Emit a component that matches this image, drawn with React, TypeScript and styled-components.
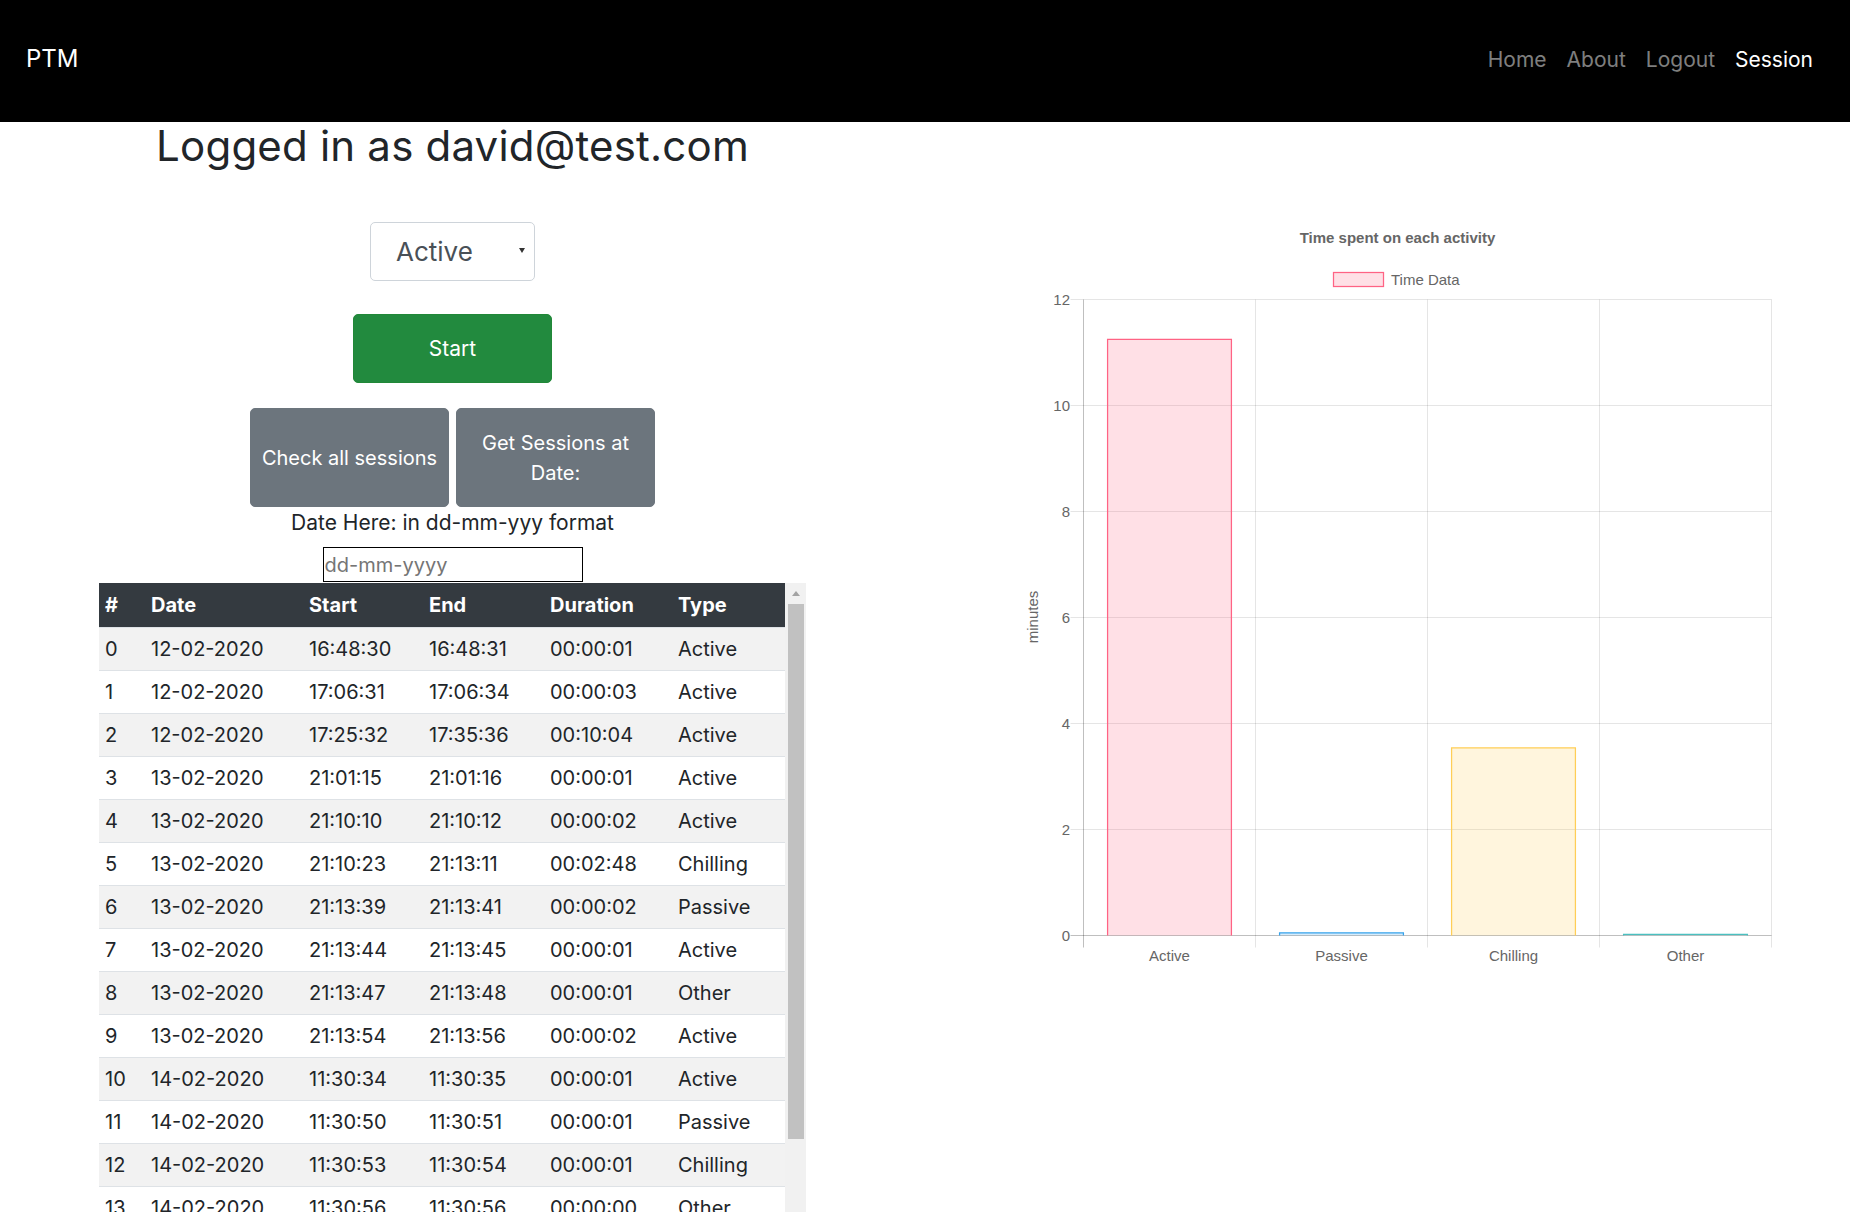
import React from "react";
import styled, { createGlobalStyle } from "styled-components";

const GlobalStyle = createGlobalStyle`
  html, body { margin: 0; padding: 0; height: 100%; overflow: hidden; background: #fff; }
  body { font-family: Inter, "Open Sans", sans-serif; color: #212529; }
  #root { height: 100%; }
  *, *::before, *::after { box-sizing: border-box; }
`;

const Page = styled.div`
  height: 100vh;
  display: flex;
  flex-direction: column;
`;

const Navbar = styled.nav`
  flex: none;
  height: 122px;
  background: #000;
  display: flex;
  align-items: center;
  justify-content: space-between;
  padding: 0 27px 3px 26px;
`;

const Brand = styled.a`
  color: #fff;
  font-size: 24px;
  line-height: 1.2;
  text-decoration: none;
`;

const NavList = styled.div`
  display: flex;
  align-items: center;
`;

const NavLink = styled.a<{ $active?: boolean }>`
  padding: 0 10px;
  font-size: 21px;
  line-height: 1.2;
  text-decoration: none;
  color: ${(p) => (p.$active ? "#fff" : "rgba(255,255,255,0.5)")};
`;

const Main = styled.main`
  flex: 1 1 auto;
  min-height: 0;
  display: grid;
  grid-template-columns: 1fr 1fr;
  column-gap: 40px;
`;

const LeftCol = styled.section`
  min-height: 0;
  display: flex;
  flex-direction: column;
  align-items: center;
  & > * {
    flex-shrink: 0;
  }
`;

const Heading = styled.h1`
  margin: 0;
  font-size: 42px;
  line-height: 48px;
  font-weight: 400;
  letter-spacing: 0.2px;
  color: #212529;
`;

const SelectBox = styled.div`
  margin-top: 52px;
  width: 165px;
  height: 59px;
  border: 1px solid #ced4da;
  border-radius: 5px;
  display: flex;
  align-items: center;
  justify-content: space-between;
  padding: 0 9px 0 25px;
  font-size: 26px;
  color: #495057;
`;

const Caret = styled.svg`
  display: block;
  margin-bottom: 2px;
`;

const Button = styled.button<{ $variant: "success" | "secondary"; $height: number }>`
  width: 199px;
  height: ${(p) => p.$height}px;
  padding: 0 8px;
  border: 1px solid ${(p) => (p.$variant === "success" ? "#218838" : "#6c757d")};
  border-radius: 5px;
  background: ${(p) => (p.$variant === "success" ? "#228a3e" : "#6c757d")};
  color: #fff;
  font-family: inherit;
  font-size: 20px;
  line-height: 30px;
  text-align: center;
  cursor: pointer;
`;

const StartButton = styled(Button)`
  margin-top: 33px;
  font-size: 21px;
`;

const ButtonRow = styled.div`
  margin-top: 25px;
  display: flex;
  gap: 7px;
`;

const Hint = styled.div`
  margin-top: 1px;
  font-size: 21px;
  line-height: 30px;
  color: #212529;
`;

const DateInput = styled.input`
  margin-top: 9px;
  width: 260px;
  height: 35px;
  padding: 0 1px;
  border: 1px solid #000;
  border-radius: 0;
  font-family: inherit;
  font-size: 20px;
  color: #212529;
  outline: none;
  &::placeholder {
    color: #757575;
  }
`;

const TableArea = styled.div`
  margin-top: 1px;
  width: 707px;
  flex: 1 1 0 !important;
  min-height: 0;
  display: flex;
`;

const TableScroll = styled.div`
  flex: 1 1 auto;
  min-width: 0;
  overflow: hidden;
`;

const ScrollBar = styled.div`
  flex: none;
  width: 21px;
  margin-left: 0;
  background: #f1f1f1;
  display: flex;
  flex-direction: column;
`;

const ScrollArrow = styled.div`
  height: 21px;
  display: flex;
  align-items: center;
  justify-content: center;
`;

const ScrollTrack = styled.div`
  flex: 1 1 auto;
  padding: 0 2px 0 3px;
`;

const ScrollThumb = styled.div`
  height: 535px;
  background: #c1c1c1;
`;

const Table = styled.table`
  width: 686px;
  border-collapse: collapse;
  table-layout: fixed;
  font-size: 20px;
  line-height: 30px;
  color: #212529;
`;

const Th = styled.th<{ $w: number }>`
  width: ${(p) => p.$w}px;
  padding: 7px 6px;
  background: #343a40;
  color: #fff;
  font-weight: 700;
  text-align: left;
  white-space: nowrap;
`;

const Tr = styled.tr<{ $striped: boolean }>`
  background: ${(p) => (p.$striped ? "#f2f2f2" : "#fff")};
`;

const Td = styled.td`
  padding: 6px 6px;
  border-top: 1px solid #dee2e6;
  white-space: nowrap;
`;

const RightCol = styled.section`
  min-width: 0;
`;

const ChartSvg = styled.svg`
  display: block;
  font-family: "Liberation Sans", Arial, sans-serif;
`;

const ChartText = styled.text<{ $bold?: boolean }>`
  font-size: 15px;
  fill: #666;
  font-weight: ${(p) => (p.$bold ? 700 : 400)};
`;

const columns = [
  { label: "#", w: 46 },
  { label: "Date", w: 158 },
  { label: "Start", w: 120 },
  { label: "End", w: 121 },
  { label: "Duration", w: 128 },
  { label: "Type", w: 113 },
];

const rows: string[][] = [
  ["0", "12-02-2020", "16:48:30", "16:48:31", "00:00:01", "Active"],
  ["1", "12-02-2020", "17:06:31", "17:06:34", "00:00:03", "Active"],
  ["2", "12-02-2020", "17:25:32", "17:35:36", "00:10:04", "Active"],
  ["3", "13-02-2020", "21:01:15", "21:01:16", "00:00:01", "Active"],
  ["4", "13-02-2020", "21:10:10", "21:10:12", "00:00:02", "Active"],
  ["5", "13-02-2020", "21:10:23", "21:13:11", "00:02:48", "Chilling"],
  ["6", "13-02-2020", "21:13:39", "21:13:41", "00:00:02", "Passive"],
  ["7", "13-02-2020", "21:13:44", "21:13:45", "00:00:01", "Active"],
  ["8", "13-02-2020", "21:13:47", "21:13:48", "00:00:01", "Other"],
  ["9", "13-02-2020", "21:13:54", "21:13:56", "00:00:02", "Active"],
  ["10", "14-02-2020", "11:30:34", "11:30:35", "00:00:01", "Active"],
  ["11", "14-02-2020", "11:30:50", "11:30:51", "00:00:01", "Passive"],
  ["12", "14-02-2020", "11:30:53", "11:30:54", "00:00:01", "Chilling"],
  ["13", "14-02-2020", "11:30:56", "11:30:56", "00:00:00", "Other"],
];

const bars = [
  { label: "Active", value: 11.25, fill: "rgba(255,99,132,0.2)", stroke: "rgb(255,99,132)" },
  { label: "Passive", value: 0.05, fill: "rgba(54,162,235,0.2)", stroke: "rgb(54,162,235)" },
  { label: "Chilling", value: 3.54, fill: "rgba(255,206,86,0.2)", stroke: "rgb(255,206,86)" },
  { label: "Other", value: 0.02, fill: "rgba(75,192,192,0.2)", stroke: "rgb(75,192,192)" },
];

const ZERO_Y = 935.5;
const UNIT = 53;
const AXIS_L = 1083.5;
const CAT_W = 172;
const AXIS_R = AXIS_L + CAT_W * 4;
const yOf = (v: number) => ZERO_Y - UNIT * v;

function BarChart() {
  const ticks = [0, 2, 4, 6, 8, 10, 12];
  const barW = CAT_W * 0.72;
  return (
    <ChartSvg width={905} height={860} viewBox="945 122 905 860">
      <ChartText $bold x={1397.5} y={243} textAnchor="middle">
        Time spent on each activity
      </ChartText>
      <rect x={1333.5} y={272.5} width={50} height={14} fill="rgba(255,99,132,0.2)" stroke="rgb(255,99,132)" strokeWidth={1.25} />
      <ChartText x={1391} y={285}>Time Data</ChartText>

      {ticks.map((t) => (
        <g key={t}>
          <line
            x1={1070.5}
            x2={AXIS_R}
            y1={yOf(t)}
            y2={yOf(t)}
            stroke={t === 0 ? "rgba(0,0,0,0.25)" : "rgba(0,0,0,0.1)"}
            strokeWidth={1}
          />
          <ChartText x={1070} y={yOf(t) + 5} textAnchor="end">
            {t}
          </ChartText>
        </g>
      ))}

      {[0, 1, 2, 3, 4].map((i) => (
        <line
          key={i}
          x1={AXIS_L + i * CAT_W}
          x2={AXIS_L + i * CAT_W}
          y1={yOf(12)}
          y2={947.5}
          stroke={i === 0 ? "rgba(0,0,0,0.25)" : "rgba(0,0,0,0.1)"}
          strokeWidth={1}
        />
      ))}

      {bars.map((b, i) => {
        const x = AXIS_L + i * CAT_W + (CAT_W - barW) / 2;
        const top = yOf(b.value);
        return (
          <g key={b.label}>
            <rect x={x} y={top} width={barW} height={ZERO_Y - top} fill={b.fill} />
            <polyline
              points={`${x},${ZERO_Y} ${x},${top} ${x + barW},${top} ${x + barW},${ZERO_Y}`}
              fill="none"
              stroke={b.stroke}
              strokeWidth={1.25}
            />
            <ChartText x={AXIS_L + i * CAT_W + CAT_W / 2} y={961} textAnchor="middle">
              {b.label}
            </ChartText>
          </g>
        );
      })}

      <ChartText x={1038} y={617} textAnchor="middle" transform="rotate(-90 1038 617)">
        minutes
      </ChartText>
    </ChartSvg>
  );
}

export default function App() {
  return (
    <>
      <GlobalStyle />
      <Page>
        <Navbar>
          <Brand href="#">PTM</Brand>
          <NavList>
            <NavLink href="#">Home</NavLink>
            <NavLink href="#">About</NavLink>
            <NavLink href="#">Logout</NavLink>
            <NavLink href="#" $active>
              Session
            </NavLink>
          </NavList>
        </Navbar>
        <Main>
          <LeftCol>
            <Heading>Logged in as david@test.com</Heading>
            <SelectBox>
              <span>Active</span>
              <Caret width="6" height="5" viewBox="0 0 6 5">
                <polygon points="0,0 6,0 3,5" fill="#333" />
              </Caret>
            </SelectBox>
            <StartButton $variant="success" $height={69}>
              Start
            </StartButton>
            <ButtonRow>
              <Button $variant="secondary" $height={99}>
                Check all sessions
              </Button>
              <Button $variant="secondary" $height={99}>
                Get Sessions at Date:
              </Button>
            </ButtonRow>
            <Hint>Date Here: in dd-mm-yyy format</Hint>
            <DateInput placeholder="dd-mm-yyyy" />
            <TableArea>
              <TableScroll>
                <Table>
                  <thead>
                    <tr>
                      {columns.map((c) => (
                        <Th key={c.label} $w={c.w}>
                          {c.label}
                        </Th>
                      ))}
                    </tr>
                  </thead>
                  <tbody>
                    {rows.map((r, i) => (
                      <Tr key={r[0]} $striped={i % 2 === 0}>
                        {r.map((cell, j) => (
                          <Td key={j}>{cell}</Td>
                        ))}
                      </Tr>
                    ))}
                  </tbody>
                </Table>
              </TableScroll>
              <ScrollBar>
                <ScrollArrow>
                  <svg width="8" height="5" viewBox="0 0 8 5">
                    <polygon points="0,5 8,5 4,0" fill="#a3a3a3" />
                  </svg>
                </ScrollArrow>
                <ScrollTrack>
                  <ScrollThumb />
                </ScrollTrack>
              </ScrollBar>
            </TableArea>
          </LeftCol>
          <RightCol>
            <BarChart />
          </RightCol>
        </Main>
      </Page>
    </>
  );
}
